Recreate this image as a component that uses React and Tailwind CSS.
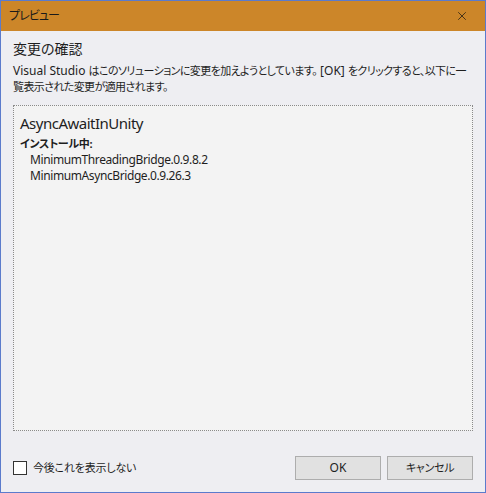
import { X } from "lucide-react";

const FONT =
  "font-['Segoe_UI','Noto_Sans','Noto_Sans_CJK_JP',sans-serif] [font-feature-settings:'palt']";

export default function App() {
  return (
    <div
      className={`${FONT} w-[486px] h-[493px] flex flex-col border border-[#5b7bcc] bg-[#eeeef2] text-[#1e1e1e]`}
    >
      {/* title bar */}
      <div className="h-[30px] shrink-0 bg-[#cc8629] flex items-center justify-between pl-[8px] pr-[16px]">
        <span className="text-[12px] tracking-[-0.9px] text-[#1a1a1a]">プレビュー</span>
        <X size={14} strokeWidth={1.2} className="text-[#111]" />
      </div>

      <div className="flex-1 flex flex-col px-[12px] pt-[8px] pb-[12px]">
        <h1 className="text-[14px] leading-[20px]">変更の確認</h1>
        <p className="mt-[4px] text-[11px] leading-[16px] whitespace-nowrap tracking-[-0.6px]">
          <span className="text-[12px] tracking-normal">Visual Studio </span>
          はこのソリューションに変更を加えようとしています。
          <span className="text-[12px] tracking-normal"> [OK] </span>
          をクリックすると、以下に一
          <br />
          覧表示された変更が適用されます。
        </p>

        {/* changes panel */}
        <div className="mt-[10px] h-[326px] border border-dotted border-[#8a8a8a] bg-[#f3f3f3] px-[6px] pt-[7px]">
          <div className="text-[15px] leading-[20px] tracking-[-0.5px]">AsyncAwaitInUnity</div>
          <div className="mt-[3px] text-[11px] leading-[16px] font-bold tracking-[-0.3px]">インストール中:</div>
          <div className="pl-[10px] text-[12px] leading-[16px] tracking-[-0.4px]">
            <div>MinimumThreadingBridge.0.9.8.2</div>
            <div>MinimumAsyncBridge.0.9.26.3</div>
          </div>
        </div>

        {/* footer */}
        <div className="mt-auto flex items-center justify-between">
          <label className="flex items-center gap-[6px] text-[11px] tracking-[-0.2px]">
            <span className="w-[14px] h-[14px] border border-[#333] bg-white" />
            今後これを表示しない
          </label>
          <div className="flex gap-[6px]">
            <button className="w-[86px] h-[24px] border border-[#adadad] bg-[#e1e1e1] text-[12px]">
              OK
            </button>
            <button className="w-[86px] h-[24px] border border-[#adadad] bg-[#e1e1e1] text-[11px] tracking-[-0.3px]">
              キャンセル
            </button>
          </div>
        </div>
      </div>
    </div>
  );
}
